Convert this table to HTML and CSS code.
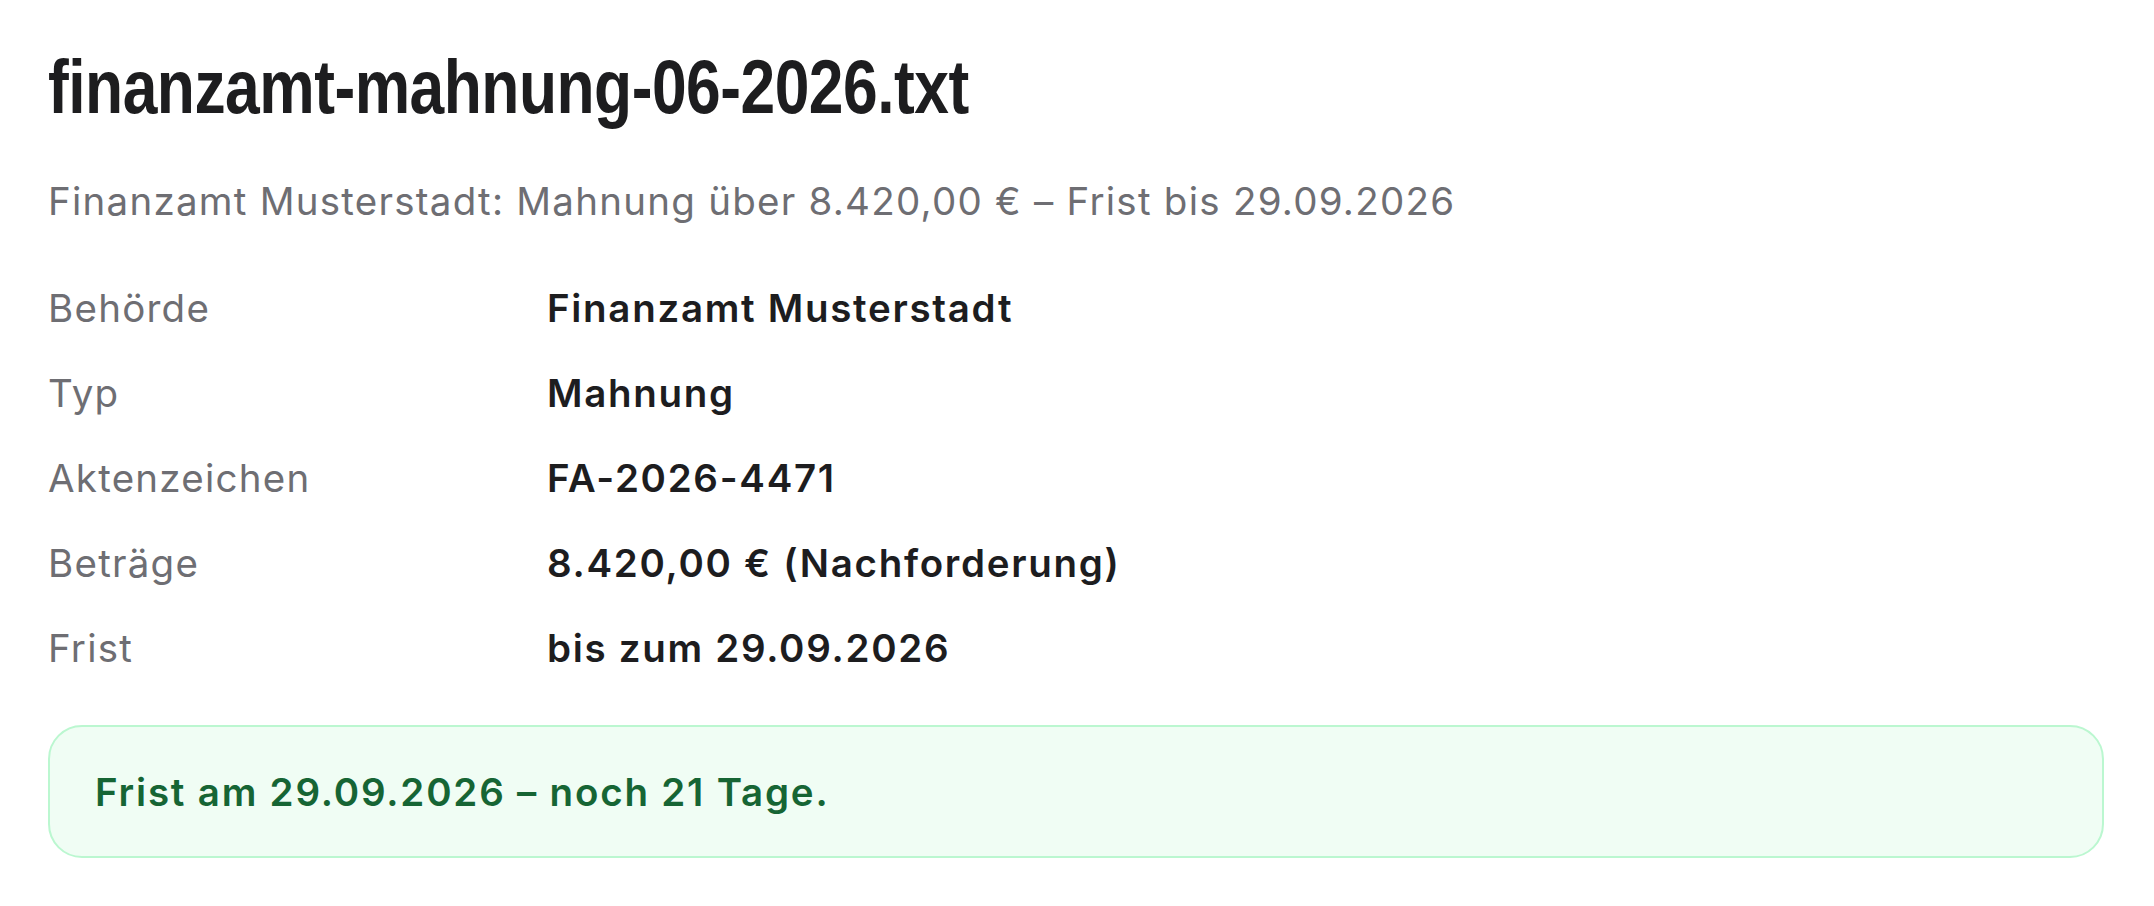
FILE: index.html
```html
<!DOCTYPE html>
<html lang="de">
<head>
<meta charset="utf-8">
<title>finanzamt-mahnung-06-2026.txt</title>
<link rel="stylesheet" href="styles.css">
</head>
<body>
<main class="doc">
  <h1 class="doc-title"><span class="doc-title-text">finanzamt-mahnung-06-2026.txt</span></h1>
  <p class="doc-summary">Finanzamt Musterstadt: Mahnung über 8.420,00 € – Frist bis 29.09.2026</p>
  <dl class="facts">
    <dt class="fact-label">Behörde</dt>
    <dd class="fact-value">Finanzamt Musterstadt</dd>
    <dt class="fact-label">Typ</dt>
    <dd class="fact-value">Mahnung</dd>
    <dt class="fact-label">Aktenzeichen</dt>
    <dd class="fact-value">FA-2026-4471</dd>
    <dt class="fact-label">Beträge</dt>
    <dd class="fact-value">8.420,00 € (Nachforderung)</dd>
    <dt class="fact-label">Frist</dt>
    <dd class="fact-value">bis zum 29.09.2026</dd>
  </dl>
  <div class="notice notice-ok">Frist am 29.09.2026 – noch 21 Tage.</div>
</main>
</body>
</html>
```

FILE: styles.css
```css
html, body {
  margin: 0;
  padding: 0;
  background: #ffffff;
}

body {
  font-family: Inter, "Noto Sans", "Liberation Sans", sans-serif;
  color: #1d1d1f;
}

.doc {
  padding: 42px 50px 40px 48px;
}

.doc-title {
  margin: 0;
  font-family: "Liberation Sans", Arial, sans-serif;
  font-weight: 700;
  font-size: 76px;
  line-height: 90px;
  letter-spacing: -0.6px;
  color: #1d1d1f;
  white-space: nowrap;
}

.doc-title-text {
  display: inline-block;
  transform: scaleX(0.82);
  transform-origin: 0 50%;
}

.doc-summary {
  margin: 44px 0 0 0;
  font-size: 38.5px;
  line-height: 50px;
  letter-spacing: 1.25px;
  color: #6e6e73;
}

.facts {
  margin: 57px 0 0 0;
  display: grid;
  grid-template-columns: 499px 1fr;
  row-gap: 35px;
  font-size: 38.5px;
  line-height: 50px;
}

.fact-label {
  color: #6e6e73;
  letter-spacing: 1.25px;
}

.fact-value {
  margin: 0;
  font-weight: 600;
  letter-spacing: 1.7px;
  color: #1d1d1f;
}

.notice {
  margin-top: 52px;
  border-radius: 34px;
  padding: 40px 45px 39px 45px;
  font-size: 38.5px;
  line-height: 50px;
  font-weight: 600;
  letter-spacing: 1.8px;
}

.notice-ok {
  background: #f0fdf4;
  border: 2px solid #bbf7d0;
  color: #166534;
}
```
